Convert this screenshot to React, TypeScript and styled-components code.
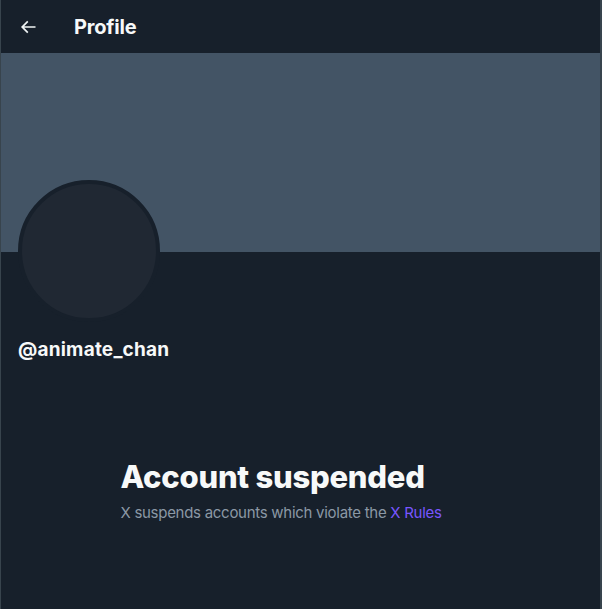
import React from "react";
import styled, { createGlobalStyle } from "styled-components";

const Global = createGlobalStyle`
  html, body { margin: 0; padding: 0; background: #15202b; }
  body { font-family: Inter, "Noto Sans", sans-serif; -webkit-font-smoothing: antialiased; }
  * { box-sizing: border-box; }
`;

const Column = styled.div`
  width: 602px;
  min-height: 609px;
  background: #17202b;
  border-left: 1px solid #38444d;
  border-right: 2px solid #38444d;
  display: flex;
  flex-direction: column;
`;

const Header = styled.header`
  height: 53px;
  display: flex;
  align-items: center;
  padding: 0 16px;
  gap: 35px;
  color: #f7f9f9;
`;

const BackButton = styled.button`
  width: 22px;
  height: 22px;
  padding: 0;
  border: 0;
  background: transparent;
  color: #eff3f4;
  display: flex;
  align-items: center;
  justify-content: center;
`;

const Title = styled.h2`
  margin: 0;
  font-size: 20px;
  font-weight: 700;
  letter-spacing: -0.2px;
`;

const Banner = styled.div`
  height: 199px;
  background: #435465;
`;

const ProfileInfo = styled.div`
  padding: 0 17px;
`;

const Avatar = styled.div`
  width: 142px;
  height: 142px;
  margin-top: -72px;
  border-radius: 50%;
  background: #202833;
  border: 4px solid #17202b;
`;

const Handle = styled.div`
  margin-top: 16px;
  font-size: 19px;
  font-weight: 700;
  color: #f7f9f9;
  letter-spacing: 0.2px;
`;

const EmptyState = styled.div`
  width: 100%;
  max-width: 400px;
  margin: 98px auto 0;
  padding: 0 20px;
`;

const EmptyTitle = styled.h1`
  margin: 0;
  font-size: 31px;
  line-height: 36px;
  font-weight: 800;
  color: #f7f9f9;
  letter-spacing: -0.25px;
`;

const EmptyText = styled.p`
  margin: 8px 0 0;
  font-size: 15px;
  line-height: 20px;
  color: #8b98a5;
  letter-spacing: -0.28px;
`;

const RulesLink = styled.a`
  color: #7856ff;
  text-decoration: none;
`;

export default function App() {
  return (
    <>
      <Global />
      <Column>
        <Header>
          <BackButton aria-label="Back">
            <svg width="20" height="20" viewBox="0 0 24 24" fill="currentColor">
              <path d="M7.414 13l5.043 5.04-1.414 1.42L3.586 12l7.457-7.46 1.414 1.42L7.414 11H21v2H7.414z" />
            </svg>
          </BackButton>
          <Title>Profile</Title>
        </Header>
        <Banner />
        <ProfileInfo>
          <Avatar />
          <Handle>@animate_chan</Handle>
        </ProfileInfo>
        <EmptyState>
          <EmptyTitle>Account suspended</EmptyTitle>
          <EmptyText>
            X suspends accounts which violate the <RulesLink href="#">X Rules</RulesLink>
          </EmptyText>
        </EmptyState>
      </Column>
    </>
  );
}
